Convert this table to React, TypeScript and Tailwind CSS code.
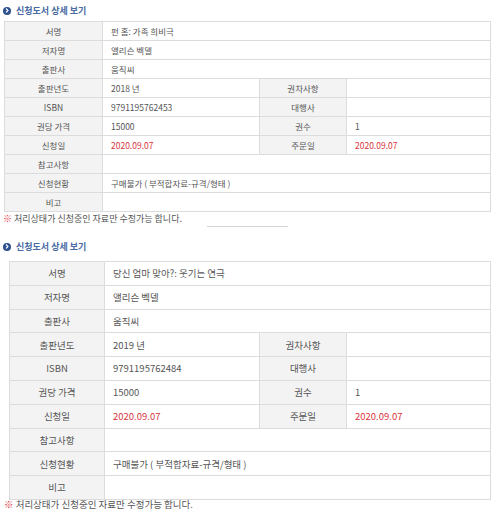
import React from "react";

type Row =
  | { label: string; value: string; red?: boolean }
  | { label: string; value: string; label2: string; value2: string; red?: boolean };

type Book = {
  title: string;
  year: string;
  isbn: string;
};

function rowsFor(book: Book): Row[] {
  return [
    { label: "서명", value: book.title },
    { label: "저자명", value: "앨리슨 벡델" },
    { label: "출판사", value: "움직씨" },
    { label: "출판년도", value: book.year, label2: "권차사항", value2: "" },
    { label: "ISBN", value: book.isbn, label2: "대행사", value2: "" },
    { label: "권당 가격", value: "15000", label2: "권수", value2: "1" },
    { label: "신청일", value: "2020.09.07", label2: "주문일", value2: "2020.09.07", red: true },
    { label: "참고사항", value: "" },
    { label: "신청현황", value: "구매불가 ( 부적합자료-규격/형태 )" },
    { label: "비고", value: "" },
  ];
}

const font = { fontFamily: '"Noto Sans CJK KR", "Noto Sans", sans-serif' };

function Heading() {
  return (
    <div className="flex items-center gap-[5px] pl-[3px]">
      <span className="flex h-[8px] w-[8px] items-center justify-center rounded-full bg-[#2d4f8e]">
        <svg width="4" height="5" viewBox="0 0 4 5">
          <path d="M1 0.5 L3 2.5 L1 4.5" stroke="#fff" strokeWidth="1.1" fill="none" />
        </svg>
      </span>
      <span className="text-[9px] font-bold leading-none text-[#4a6aa3]">신청도서 상세 보기</span>
    </div>
  );
}

type TableProps = {
  book: Book;
  rowH: string;
  text: string;
  widths: [string, string, string, string];
};

function DetailTable({ book, rowH, text, widths }: TableProps) {
  const label = `${rowH} border border-[#dcdcdc] bg-[#f3f3f3] text-center font-normal text-[#555] ${text}`;
  const cell = `${rowH} border border-[#dcdcdc] bg-white pl-[8px] text-left text-[#555] ${text}`;
  return (
    <table className="table-fixed border-collapse" style={font}>
      <colgroup>
        <col className={widths[0]} />
        <col className={widths[1]} />
        <col className={widths[2]} />
        <col className={widths[3]} />
      </colgroup>
      <tbody>
        {rowsFor(book).map((r) => (
          <tr key={r.label}>
            <th className={label}>{r.label}</th>
            {"label2" in r ? (
              <>
                <td className={`${cell} ${r.red ? "text-[#d8343c]" : ""}`}>{r.value}</td>
                <th className={label}>{r.label2}</th>
                <td className={`${cell} ${r.red ? "text-[#d8343c]" : ""}`}>{r.value2}</td>
              </>
            ) : (
              <td colSpan={3} className={cell}>
                {r.value}
              </td>
            )}
          </tr>
        ))}
      </tbody>
    </table>
  );
}

function Note({ size }: { size: string }) {
  return (
    <p className={`${size} leading-none text-[#555]`} style={font}>
      <span className="text-[#e0363e]">※</span> 처리상태가 신청중인 자료만 수정가능 합니다.
    </p>
  );
}

export default function App() {
  return (
    <div className="h-[513px] w-[500px] overflow-hidden bg-white" style={font}>
      <div className="pt-[6px]">
        <Heading />
      </div>
      <div className="mt-[6px] pl-[4px]">
        <DetailTable
          book={{ title: "펀 홈: 가족 희비극", year: "2018 년", isbn: "9791195762453" }}
          rowH="h-[19px]"
          text="text-[8.5px]"
          widths={["w-[98px]", "w-[157px]", "w-[87px]", "w-[144px]"]}
        />
      </div>
      <div className="mt-[2px] pl-[3px]">
        <Note size="text-[9px]" />
      </div>
      <div className="ml-[207px] mt-[3px] h-px w-[81px] bg-[#d4d4d4]" />

      <div className="mt-[15px]">
        <Heading />
      </div>
      <div className="mt-[10px] pl-[9px]">
        <DetailTable
          book={{ title: "당신 엄마 맞아?: 웃기는 연극", year: "2019 년", isbn: "9791195762484" }}
          rowH="h-[23.8px]"
          text="text-[9.5px]"
          widths={["w-[95px]", "w-[155px]", "w-[87px]", "w-[144px]"]}
        />
      </div>
      <div className="pl-[4px]">
        <Note size="text-[9.5px]" />
      </div>
    </div>
  );
}
